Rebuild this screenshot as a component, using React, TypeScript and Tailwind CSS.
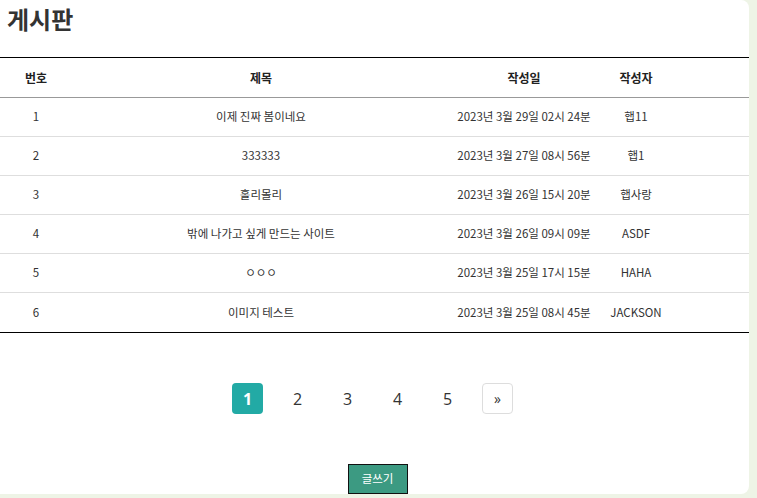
import React from 'react';

const posts = [
  { id: 1, title: '이제 진짜 봄이네요', date: '2023년 3월 29일 02시 24분', author: '햅11' },
  { id: 2, title: '333333', date: '2023년 3월 27일 08시 56분', author: '햅1' },
  { id: 3, title: '홀리몰리', date: '2023년 3월 26일 15시 20분', author: '햅사랑' },
  { id: 4, title: '밖에 나가고 싶게 만드는 사이트', date: '2023년 3월 26일 09시 09분', author: 'ASDF' },
  { id: 5, title: 'ㅇㅇㅇ', date: '2023년 3월 25일 17시 15분', author: 'HAHA' },
  { id: 6, title: '이미지 테스트', date: '2023년 3월 25일 08시 45분', author: 'JACKSON' },
];

const cols = 'grid grid-cols-[72px_378px_148px_76px_1fr]';

export default function App() {
  return (
    <div
      className="w-[757px] h-[498px] bg-[#eef4e6] overflow-hidden"
      style={{ fontFamily: '"Noto Sans CJK KR", "Noto Sans", sans-serif' }}
    >
      <div className="w-[749px] h-[494px] bg-white rounded-r-lg flex flex-col">
        <h1 className="h-[57px] pl-[7px] pt-[1px] text-[24px] font-bold text-[#333] leading-[36px]">게시판</h1>

        {/* Table */}
        <div className="border-t border-black border-b">
          <div className={`${cols} h-[40px] items-center text-[12px] font-bold text-[#222] border-b border-[#999]`}>
            <div className="text-center">번호</div>
            <div className="text-center">제목</div>
            <div className="text-center">작성일</div>
            <div className="text-center">작성자</div>
            <div />
          </div>
          {posts.map((p, i) => (
            <div
              key={p.id}
              className={`${cols} h-[39px] items-center text-[11.5px] text-[#333] ${i < posts.length - 1 ? 'border-b border-[#dedede]' : ''}`}
            >
              <div className="text-center">{p.id}</div>
              <div className="text-center">{p.title}</div>
              <div className="text-center">{p.date}</div>
              <div className="text-center">{p.author}</div>
              <div />
            </div>
          ))}
        </div>

        {/* Pagination */}
        <div className="flex justify-center items-center mt-[50px] mr-[4px] text-[16px] text-[#333]" style={{ fontFamily: '"Open Sans", sans-serif' }}>
          <div className="flex items-center gap-[19px]">
            <span className="w-[31px] h-[31px] rounded bg-[#22aaa5] text-white font-bold flex items-center justify-center">1</span>
            <span className="w-[31px] h-[31px] flex items-center justify-center">2</span>
            <span className="w-[31px] h-[31px] flex items-center justify-center">3</span>
            <span className="w-[31px] h-[31px] flex items-center justify-center">4</span>
            <span className="w-[31px] h-[31px] flex items-center justify-center">5</span>
            <span className="w-[31px] h-[31px] rounded border border-[#ddd] flex items-center justify-center text-[14px]">»</span>
          </div>
        </div>

        <div className="flex justify-center mt-[50px] ml-[6px]">
          <button className="w-[60px] h-[30px] bg-[#3c9a82] border border-[#111] text-white text-[11.5px]">글쓰기</button>
        </div>
      </div>
    </div>
  );
}
